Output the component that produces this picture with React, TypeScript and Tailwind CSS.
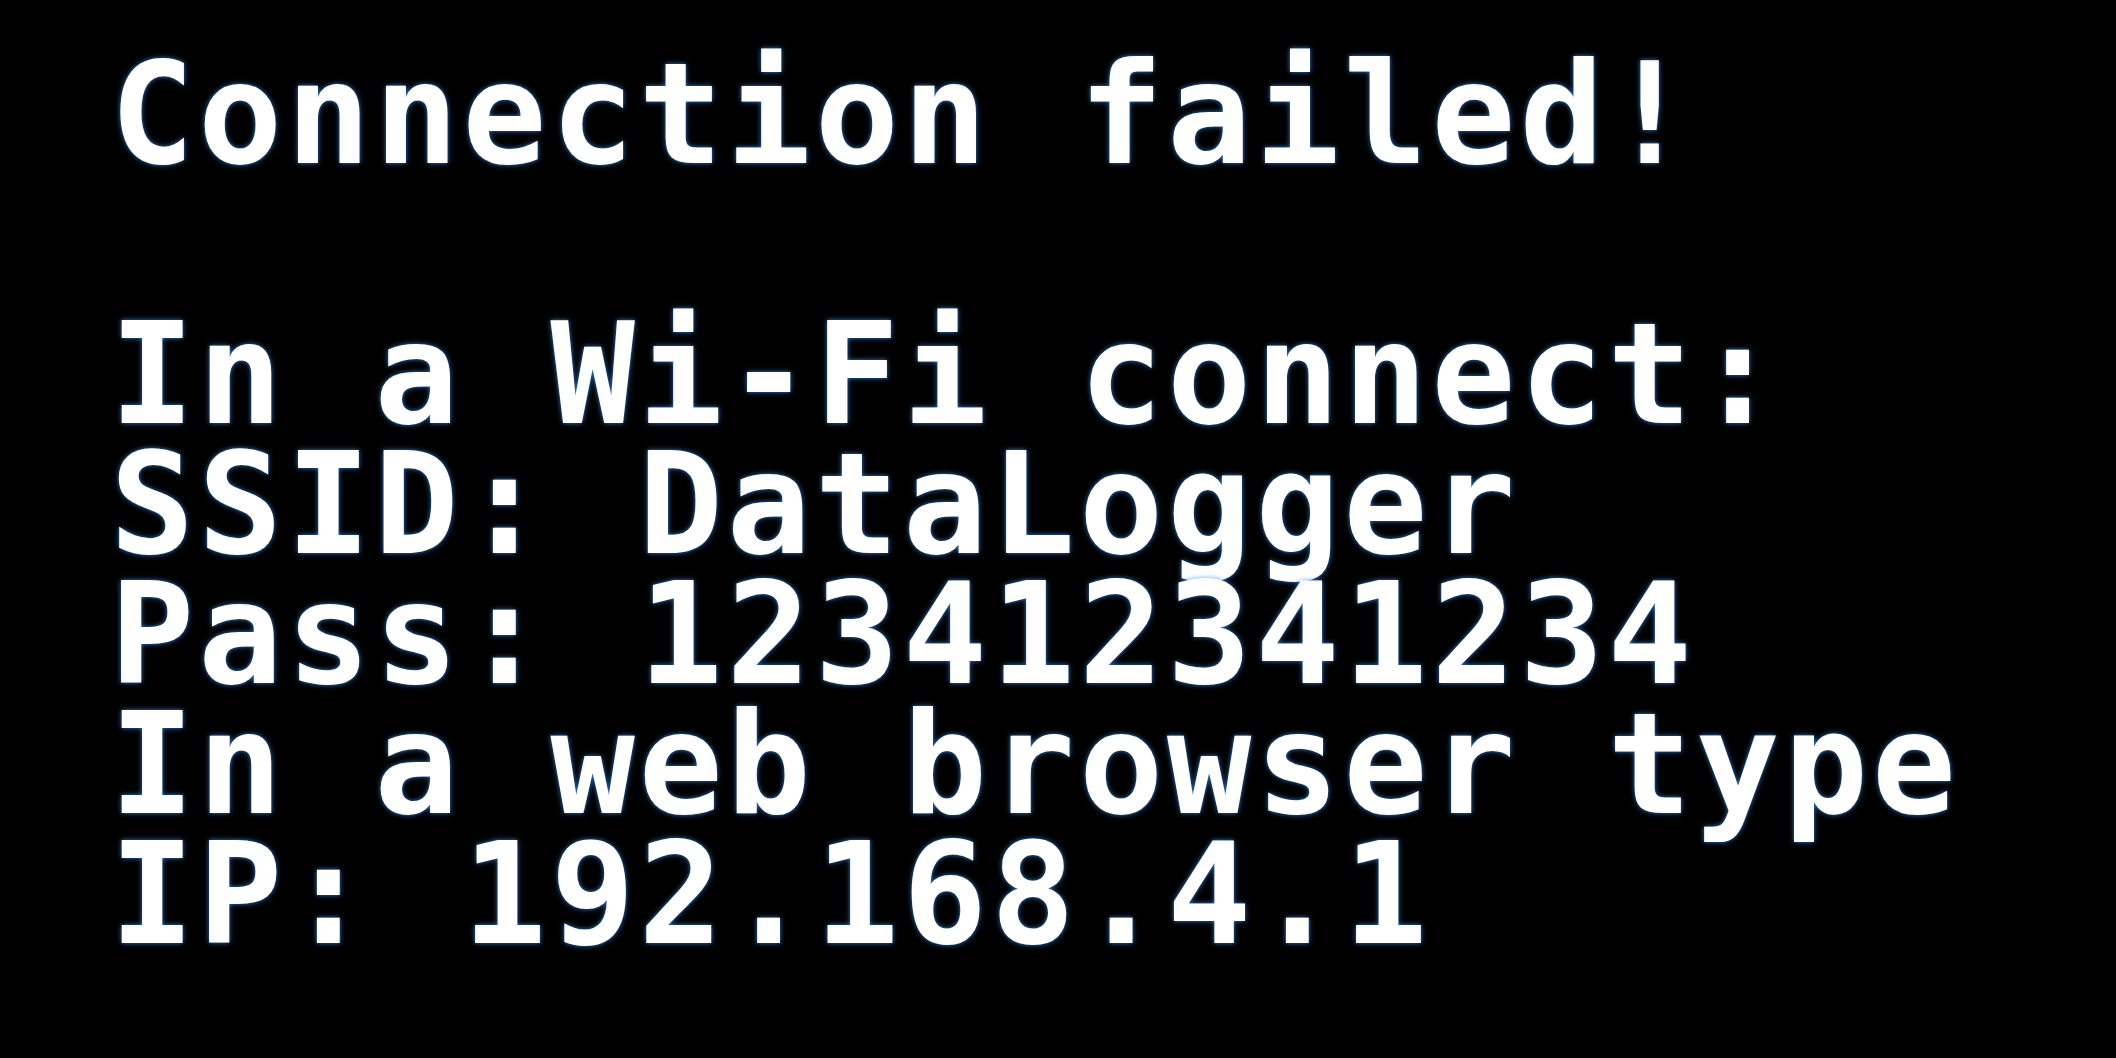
const lines = [
  "Connection failed!",
  "",
  "In a Wi-Fi connect:",
  "SSID: DataLogger",
  "Pass: 123412341234",
  "In a web browser type",
  "IP: 192.168.4.1",
];

export default function App() {
  return (
    <div className="min-h-screen w-full overflow-hidden bg-black pl-[110px] pt-[50px]">
      {/* LCD text block */}
      <div className="flex flex-col font-['DejaVu_Sans_Mono',monospace] text-[140px] font-bold leading-[130px] tracking-[3.8px] text-white [text-shadow:0_0_5px_rgba(56,150,255,0.85)]">
        {lines.map((line, i) => (
          <div key={i} className="h-[130px] whitespace-pre">
            {line}
          </div>
        ))}
      </div>
    </div>
  );
}
